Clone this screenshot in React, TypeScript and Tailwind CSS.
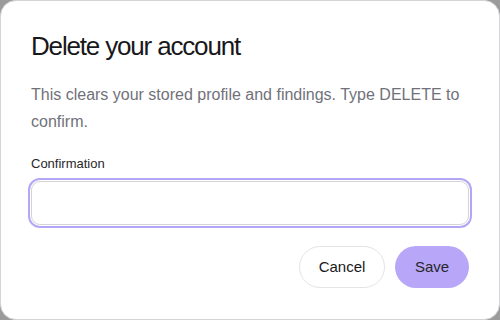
import React from "react";

export default function App() {
  return (
    <div className="w-[500px] h-[320px] bg-[#9b9b9b]" style={{ fontFamily: '"Liberation Sans", Arial, sans-serif' }}>
      <div className="w-full h-full bg-white rounded-[16px] border border-[#d4d4d8] px-[30px] pt-[29px] flex flex-col">
        <h1 className="text-[26px] leading-[32px] tracking-[-0.045em] text-[#18181b]">Delete your account</h1>
        <p className="mt-[19px] text-[16px] leading-[27px] text-[#71717a]">
          This clears your stored profile and findings. Type DELETE to confirm.
        </p>
        <label className="mt-[20px] text-[13px] leading-[18px] text-[#27272a]">Confirmation</label>
        <input
          className="mt-[8px] h-[44px] w-full rounded-[9px] border border-[#d4d4d8] bg-white outline-none ring-2 ring-[#b4a5f6] ring-offset-1 px-3 text-[15px]"
          type="text"
        />
        <div className="mt-[21px] flex justify-end gap-[10px]">
          <button className="h-[42px] w-[86px] rounded-full border border-[#e4e4e7] bg-white text-[15px] text-[#18181b]">
            Cancel
          </button>
          <button className="h-[42px] w-[74px] rounded-full bg-[#b8a6f8] text-[15px] text-[#27272a]">
            Save
          </button>
        </div>
      </div>
    </div>
  );
}
